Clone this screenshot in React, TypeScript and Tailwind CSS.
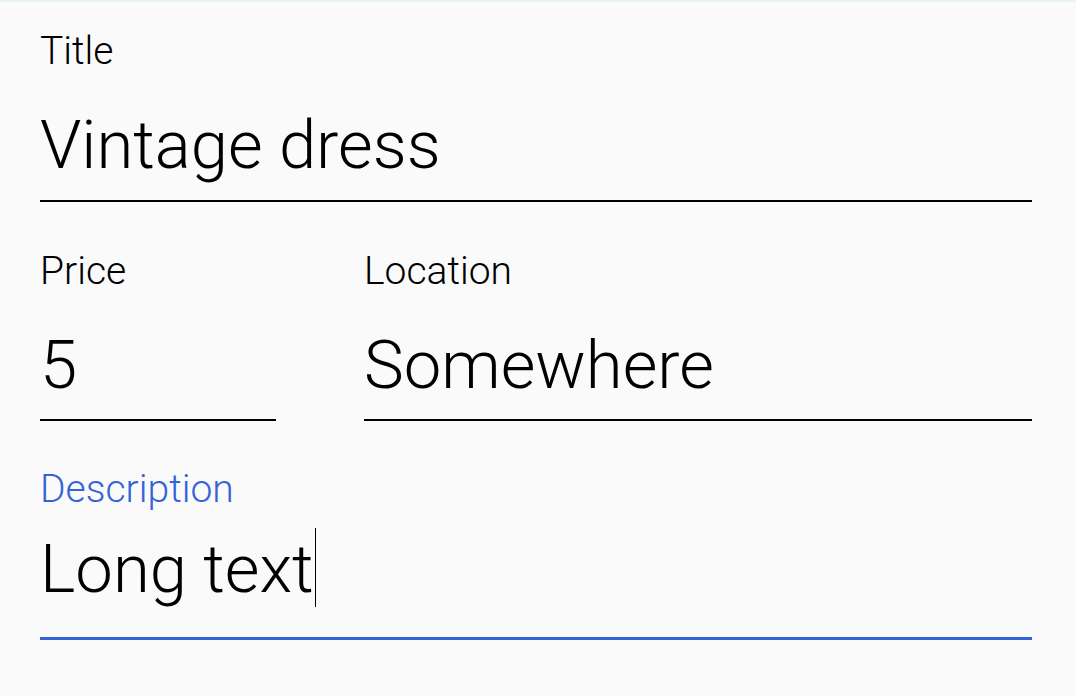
import React from "react";

function Field({
  label,
  value,
  focused = false,
  className = "",
  labelGap,
  pb,
}: {
  label: string;
  value: string;
  focused?: boolean;
  className?: string;
  labelGap: string;
  pb: string;
}) {
  return (
    <div className={`flex flex-col ${className}`}>
      <div
        className={`text-[39px] leading-[36px] font-light ${
          focused ? "text-[#3463d8]" : "text-black"
        }`}
      >
        {label}
      </div>
      <div className={`${labelGap} ${pb} text-[67px] leading-[68px] font-light text-black whitespace-nowrap`}>
        <span className="relative inline-block">
          {value}
          {focused && (
            <span className="absolute right-[-2px] top-[-7px] w-px h-[79px] bg-black" />
          )}
        </span>
      </div>
      <div className={focused ? "h-[3px] bg-[#3463d8]" : "h-[2px] bg-black"} />
    </div>
  );
}

export default function App() {
  return (
    <div
      className="w-[1076px] h-[696px] bg-[#fafafa] border-t-2 border-[#e8f3f7] overflow-hidden"
      style={{ fontFamily: "Roboto, 'Noto Sans', sans-serif" }}
    >
      <div className="pl-[40px] w-[1032px] flex flex-col">
        <Field
          className="mt-[31px]"
          label="Title"
          value="Vintage dress"
          labelGap="mt-[42px]"
          pb="pb-[21px]"
        />
        <div className="mt-[51px] flex gap-[88px]">
          <Field
            className="w-[236px]"
            label="Price"
            value="5"
            labelGap="mt-[42px]"
            pb="pb-[20px]"
          />
          <Field
            className="flex-1"
            label="Location"
            value="Somewhere"
            labelGap="mt-[42px]"
            pb="pb-[20px]"
          />
        </div>
        <Field
          className="mt-[50px]"
          label="Description"
          value="Long text"
          focused
          labelGap="mt-[28px]"
          pb="pb-[34px]"
        />
      </div>
    </div>
  );
}
